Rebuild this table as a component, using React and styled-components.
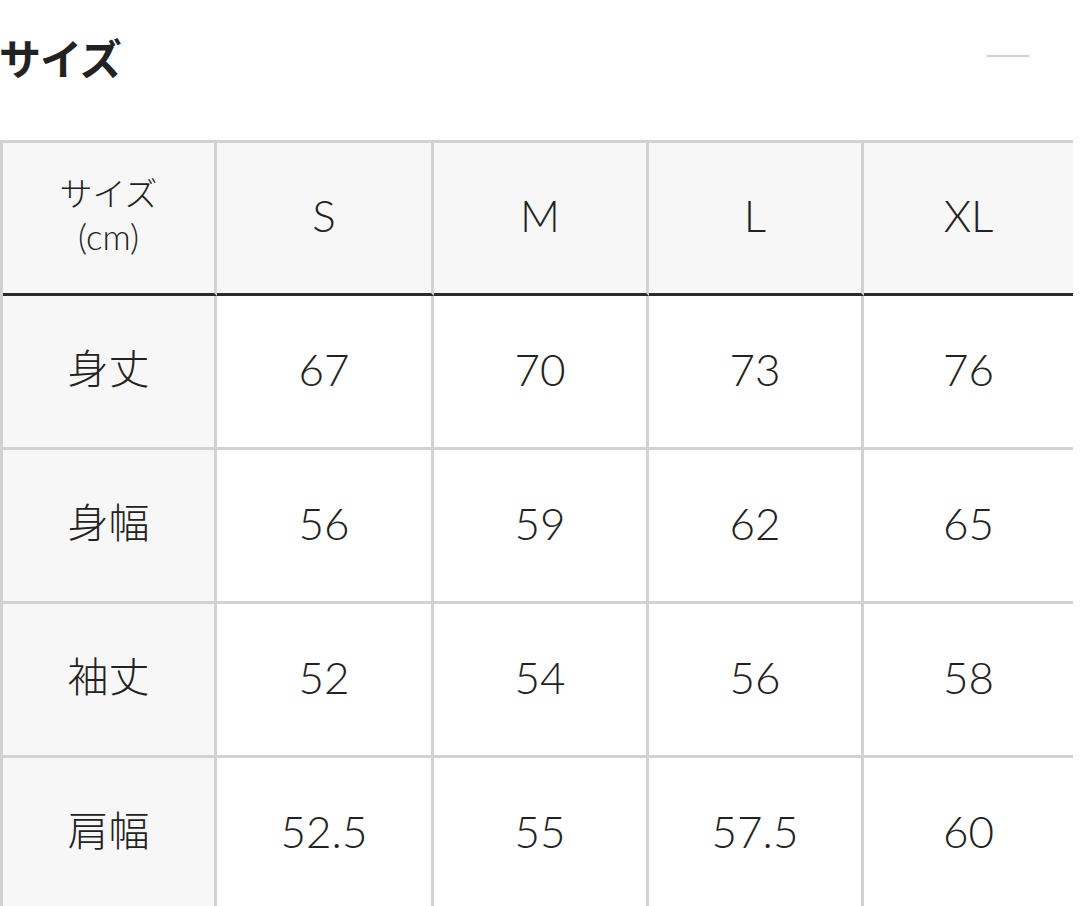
import React from "react";
import styled, { createGlobalStyle } from "styled-components";

const GlobalStyle = createGlobalStyle`
  body {
    margin: 0;
    background: #ffffff;
    color: #222222;
    font-family: Lato, "Noto Sans CJK JP", sans-serif;
  }
`;

const Page = styled.div`
  width: 1080px;
  overflow: hidden;
`;

const Header = styled.div`
  display: flex;
  align-items: center;
  justify-content: space-between;
  height: 112px;
  margin-bottom: 28px;
  padding-right: 51px;
`;

const Title = styled.h2`
  margin: 0;
  margin-left: -1px;
  font-family: "Noto Sans CJK JP", sans-serif;
  font-size: 42px;
  font-weight: 700;
  color: #222222;
  letter-spacing: -1px;
`;

const Collapse = styled.span`
  display: block;
  width: 42px;
  height: 2px;
  background: #cfcfcf;
`;

const Table = styled.table`
  width: 1070px;
  table-layout: fixed;
  border-collapse: separate;
  border-spacing: 0;
  border-top: 3px solid #d2d2d2;
  border-left: 3px solid #d2d2d2;
`;

const Cell = styled.td`
  box-sizing: border-box;
  height: ${(p) => (p.$head ? "153px" : "154px")};
  padding: 0 0 ${(p) => (p.$jp ? "12px" : "6px")};
  text-align: center;
  vertical-align: middle;
  background: ${(p) => (p.$shaded ? "#f7f7f7" : "#ffffff")};
  border-right: 3px solid #d2d2d2;
  border-bottom: 3px solid ${(p) => (p.$head ? "#2b2b2b" : "#d2d2d2")};
  font-family: ${(p) =>
    p.$jp ? '"Noto Sans CJK JP", sans-serif' : 'Lato, "Noto Sans CJK JP", sans-serif'};
  font-size: ${(p) => (p.$jp ? "41px" : "44px")};
  font-weight: 300;
  color: #222222;
  &:last-child {
    border-right: none;
  }
`;

const UnitLabel = styled.div`
  font-family: "Noto Sans CJK JP", sans-serif;
  font-size: 33px;
  line-height: 44px;
  font-weight: 300;
  color: #222222;
  margin-top: -2px;
`;

const Unit = styled.span`
  display: block;
  font-family: Lato, "Noto Sans CJK JP", sans-serif;
  font-weight: 300;
  font-size: 35px;
`;

const sizes = ["S", "M", "L", "XL"];

const rows = [
  { label: "身丈", values: ["67", "70", "73", "76"] },
  { label: "身幅", values: ["56", "59", "62", "65"] },
  { label: "袖丈", values: ["52", "54", "56", "58"] },
  { label: "肩幅", values: ["52.5", "55", "57.5", "60"] },
];

export default function App() {
  return (
    <Page>
      <GlobalStyle />
      <Header>
        <Title>サイズ</Title>
        <Collapse />
      </Header>
      <Table>
        <colgroup>
          <col style={{ width: 214 }} />
          <col style={{ width: 217 }} />
          <col style={{ width: 215 }} />
          <col style={{ width: 215 }} />
          <col style={{ width: 209 }} />
        </colgroup>
        <thead>
          <tr>
            <Cell as="th" $head $shaded>
              <UnitLabel>
                サイズ
                <Unit>(cm)</Unit>
              </UnitLabel>
            </Cell>
            {sizes.map((s) => (
              <Cell as="th" key={s} $head $shaded>
                {s}
              </Cell>
            ))}
          </tr>
        </thead>
        <tbody>
          {rows.map((row) => (
            <tr key={row.label}>
              <Cell $shaded $jp>
                {row.label}
              </Cell>
              {row.values.map((v, i) => (
                <Cell key={i}>{v}</Cell>
              ))}
            </tr>
          ))}
        </tbody>
      </Table>
    </Page>
  );
}
